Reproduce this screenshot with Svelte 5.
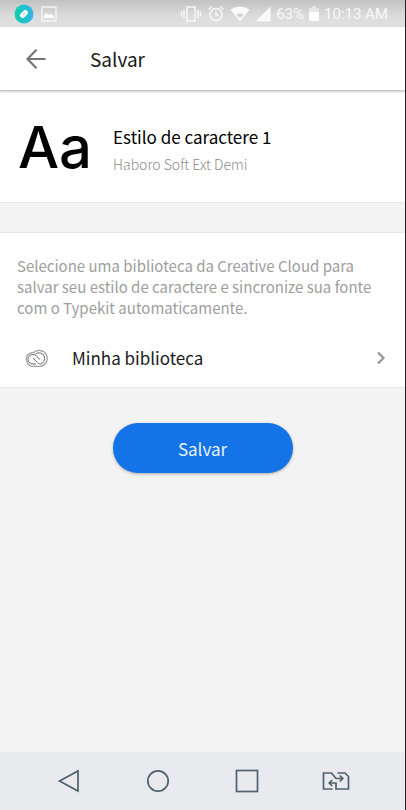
<script lang="ts">
  let styleName = "Estilo de caractere 1";
  let fontName = "Haboro Soft Ext Demi";
  let library = "Minha biblioteca";
</script>

<div class="screen">
  <div class="status">
    <div class="group">
      <svg width="20" height="20" viewBox="0 0 20 20">
        <defs>
          <linearGradient id="capture" x1="0" x2="1">
            <stop offset="0" stop-color="#10cfae" />
            <stop offset="1" stop-color="#31b5e6" />
          </linearGradient>
        </defs>
        <circle cx="10" cy="10" r="9.5" fill="url(#capture)" />
        <rect x="5.5" y="7.4" width="9" height="5.2" rx="2.6" fill="#fff" transform="rotate(-43 10 10)" />
        <path d="M8.8 11.2l2.4-2.4" stroke="#55cfd4" stroke-width="0.8" />
      </svg>
      <svg width="16" height="16" viewBox="0 0 16 16">
        <rect x="1" y="1" width="14" height="14" fill="none" stroke="#f8f8f8" stroke-width="1.3" />
        <path d="M3 12V9.5L5.5 7l2 2L10 8l3 2.5V12z" fill="#fff" />
      </svg>
    </div>
    <div class="group right">
      <svg width="22" height="18" viewBox="0 0 22 18">
        <path d="M7 2h8v14H7zM4 5v8M18 5v8M1.5 6.5v5M20.5 6.5v5" fill="none" stroke="#f6f6f6" stroke-width="1.6" />
      </svg>
      <svg width="18" height="18" viewBox="0 0 18 18">
        <path d="M9 3.5a6 6 0 1 0 .1 0zM9 6v4h3M1.5 4.5L5 1.5M16.5 4.5L13 1.5" fill="none" stroke="#f6f6f6" stroke-width="1.6" />
      </svg>
      <svg width="20" height="16" viewBox="0 0 20 16">
        <path d="M0.5 3.5Q10-2.5 19.5 3.5L10 15.5z" fill="#fafafa" />
        <path d="M6.5 8.5Q10 6.5 13.5 8.5L10 12z" fill="#d2d2d2" />
      </svg>
      <svg width="16" height="16" viewBox="0 0 16 16">
        <path d="M0.5 15.5L15.5 0.5v15z" fill="#fafafa" />
      </svg>
      <span>63%</span>
      <svg width="10" height="16" viewBox="0 0 10 16">
        <path d="M3 0h4v2h3v4H0V2h3z" fill="#e6e6e6" />
        <path d="M0 6h10v8q0 1-1 1H1q-1 0-1-1z" fill="#fff" />
      </svg>
      <time>10:13 AM</time>
    </div>
  </div>

  <header>
    <button class="back" aria-label="Voltar">
      <svg width="20" height="22" viewBox="0 0 20 22">
        <path d="M19.5 11H2M10.5 1.8L1.5 11l9 9.2" fill="none" stroke="#757575" stroke-width="2.2" />
      </svg>
    </button>
    <h1>Salvar</h1>
  </header>

  <main>
    <section class="preview">
      <div class="sample">Aa</div>
      <div class="names">
        <h2>{styleName}</h2>
        <p>{fontName}</p>
      </div>
    </section>

    <section class="library">
      <p>
        Selecione uma biblioteca da Creative Cloud para salvar seu estilo de
        caractere e sincronize sua fonte com o Typekit automaticamente.
      </p>
      <button class="row">
        <svg width="24" height="20" viewBox="0 0 24 20">
          <g fill="none">
            <path d="M8 18.3A7 7 0 0 1 5.800 4.8Q7.500 4.2 8.800 4.500A8 8 0 1 1 15.500 18.3z" stroke="#a2a2a2" stroke-width="1.3" />
            <path d="M12.5 14.5L8 10.2M11 16H8A4.8 4.8 0 1 1 11.2 7.8L15 11.5M10.5 6A5.700 5.700 0 1 1 15.5 16Q13.5 16 12.5 14.5" stroke="#6a6a6a" stroke-width="1" />
          </g>
        </svg>
        <span>{library}</span>
        <svg class="chevron" width="10" height="14" viewBox="0 0 10 14">
          <path d="M2 1.5L7.500 7 2 12.5" fill="none" stroke="#959595" stroke-width="2.2" />
        </svg>
      </button>
    </section>

    <button class="save">Salvar</button>
  </main>

  <nav>
    <button aria-label="Voltar">
      <svg width="28" height="28" viewBox="0 0 28 28">
        <path d="M4.5 14L23 4v20z" />
      </svg>
    </button>
    <button aria-label="Início">
      <svg width="28" height="28" viewBox="0 0 28 28">
        <circle cx="14" cy="14" r="10.2" />
      </svg>
    </button>
    <button aria-label="Recentes">
      <svg width="28" height="28" viewBox="0 0 28 28">
        <rect x="3.5" y="3.5" width="21" height="21" />
      </svg>
    </button>
    <button aria-label="Trocar SIM">
      <svg width="28" height="28" viewBox="0 0 28 28">
        <path d="M10.500 22H1.500V6H9.500L14 11.500H20M15.500 6H23L26.500 9.500V22H14V16H8M17.800 8.500l3 3-3 3M10.200 13l-3 3 3 3" />
      </svg>
    </button>
  </nav>
</div>

<style>
  :global(body) {
    margin: 0;
  }

  * {
    box-sizing: border-box;
  }

  .screen {
    display: flex;
    flex-direction: column;
    min-height: 100vh;
    border-right: 1px solid #222;
    background: #f3f3f3;
    color: #1a1a1a;
    font-family: "Noto Sans CJK SC", "Noto Sans", sans-serif;
  }

  h1,
  h2,
  p {
    margin: 0;
    font-weight: normal;
  }

  button {
    border: none;
    padding: 0;
    background: none;
    color: inherit;
    font: inherit;
    cursor: pointer;
  }

  svg {
    display: block;
    flex: none;
  }

  .status {
    display: flex;
    justify-content: space-between;
    height: 27px;
    padding: 0 17px 0 14px;
    background: linear-gradient(#c2c2c2, #dcdcdc 60%, #e0e0e0);
    color: #f8f8f8;
    font-family: Roboto, sans-serif;
    font-size: 15px;
  }

  .group {
    display: flex;
    align-items: center;
    gap: 7px;
  }

  .right {
    gap: 5px;
  }

  header {
    display: flex;
    align-items: center;
    gap: 44px;
    height: 64px;
    padding: 0 26px;
    background: #fff;
    border-bottom: 1px solid #c8c8c8;
    box-shadow: 0 1px 2px rgba(0, 0, 0, 0.2);
    z-index: 1;
  }

  h1 {
    font-size: 19px;
    line-height: 28px;
  }

  main {
    flex: 1;
    display: flex;
    flex-direction: column;
  }

  section {
    background: #fff;
    border-bottom: 1px solid #e8e8e8;
  }

  .preview {
    display: flex;
    align-items: center;
    gap: 21px;
    height: 112px;
    padding: 0 18px;
  }

  .sample {
    color: #000;
    font-family: Inter, sans-serif;
    font-size: 58px;
    font-weight: 500;
    line-height: 64px;
  }

  .names {
    padding-top: 6px;
  }

  h2 {
    color: #000;
    font-size: 17px;
    line-height: 28px;
  }

  .names p {
    color: #8c8c8c;
    font-size: 14px;
    font-weight: 300;
    line-height: 26px;
  }

  .library {
    margin-top: 29px;
    border-top: 1px solid #e8e8e8;
  }

  .library p {
    padding: 22px 17px 0;
    color: #9e9e9e;
    font-size: 15px;
    line-height: 21px;
  }

  .row {
    display: flex;
    align-items: center;
    width: 100%;
    height: 69px;
    padding: 10px 19px 0 25px;
    gap: 23px;
    font-size: 17px;
  }

  .chevron {
    margin-left: auto;
  }

  .save {
    align-self: center;
    width: 180px;
    height: 50px;
    margin: 35px 0;
    border-radius: 25px;
    background: #1473e6;
    box-shadow: 0 1px 3px rgba(0, 0, 0, 0.3);
    color: #e8f1fc;
    font-size: 17px;
  }

  nav {
    display: flex;
    justify-content: space-between;
    align-items: center;
    height: 58px;
    padding: 0 55px;
    background: #e8eaed;
  }

  nav svg {
    fill: none;
    stroke: #50616d;
    stroke-width: 1.7;
  }
</style>
